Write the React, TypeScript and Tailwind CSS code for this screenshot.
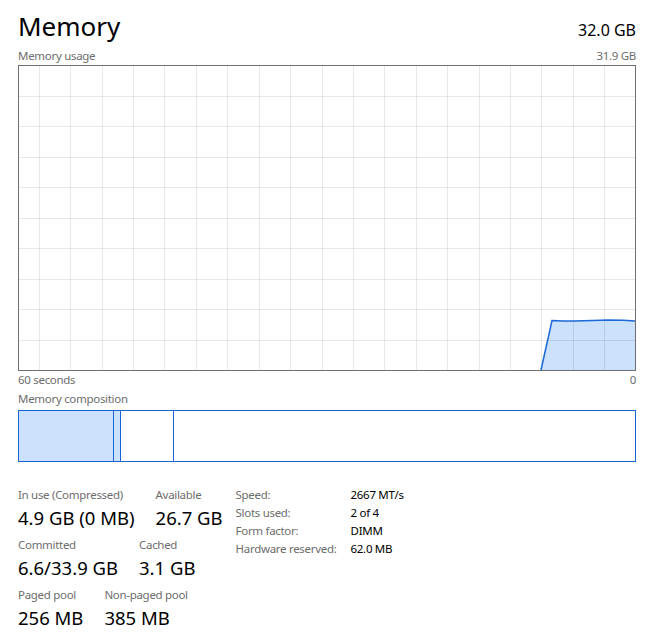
const vLines = [21, 52, 84, 115, 146, 178, 209, 241, 272, 304, 335, 366, 398, 429, 461, 492, 523, 555, 586];
const hLines = [31, 61, 92, 122, 153, 183, 214, 244, 275];

function UsageChart() {
  const top = "523,305 534,255.5 545,256 556,256 575,255.5 590,255 605,255.2 617,256";
  return (
    <svg width="618" height="306" className="block">
      <rect x="0" y="0" width="618" height="306" fill="#fff" />
      <polygon points={`${top} 617,305 523,305`} fill="#cce1fb" />
      {vLines.map((x) => (
        <line key={x} x1={x + 0.5} y1="1" x2={x + 0.5} y2="305" stroke="#000" strokeOpacity="0.09" />
      ))}
      {hLines.map((y) => (
        <line key={y} x1="1" y1={y + 0.5} x2="617" y2={y + 0.5} stroke="#000" strokeOpacity="0.09" />
      ))}
      <polyline points={top} fill="none" stroke="#1a6ad8" strokeWidth="1.5" />
      <rect x="0.5" y="0.5" width="617" height="305" fill="none" stroke="#6f6f6f" />
    </svg>
  );
}

function Stat({ label, value }: { label: string; value: string }) {
  return (
    <div className="flex flex-col">
      <div className="text-[11.5px] leading-[16px] tracking-[-0.3px] text-[#6d6d6d]">{label}</div>
      <div className="mt-[3px] text-[18.5px] leading-[24px] text-black">{value}</div>
    </div>
  );
}

const details = [
  ["Speed:", "2667 MT/s"],
  ["Slots used:", "2 of 4"],
  ["Form factor:", "DIMM"],
  ["Hardware reserved:", "62.0 MB"],
];

export default function App() {
  return (
    <div className="w-[652px] h-[642px] overflow-hidden bg-white pl-[18px] pr-[16px] font-['Noto_Sans',sans-serif] text-black">
      <div className="flex items-baseline justify-between pt-[9px]">
        <h1 className="text-[26px] leading-[34px] font-normal">Memory</h1>
        <span className="text-[16px] leading-[20px]">32.0 GB</span>
      </div>

      <div className="mt-[5px] flex justify-between text-[11.5px] leading-[15px] tracking-[-0.3px] text-[#6d6d6d]">
        <span>Memory usage</span>
        <span>31.9 GB</span>
      </div>

      <div className="mt-[2px]">
        <UsageChart />
      </div>

      <div className="mt-[1px] flex justify-between text-[11.5px] leading-[16px] tracking-[-0.3px] text-[#6d6d6d]">
        <span>60 seconds</span>
        <span>0</span>
      </div>

      <div className="mt-[3px] text-[11.5px] leading-[16px] tracking-[-0.3px] text-[#6d6d6d]">Memory composition</div>

      <div className="mt-[3px] flex h-[52px] border border-[#1464d8]">
        <div className="w-[95px] border-r border-[#1464d8] bg-[#cce1fb]" />
        <div className="w-[7px] border-r border-[#1464d8] bg-[#cce1fb]" />
        <div className="w-[53px] border-r border-[#1464d8]" />
        <div className="flex-1" />
      </div>

      <div className="mt-[25px] flex gap-[13px]">
        <div className="flex flex-col gap-[7px]">
          <div className="flex gap-[21px]">
            <Stat label="In use (Compressed)" value="4.9 GB (0 MB)" />
            <Stat label="Available" value="26.7 GB" />
          </div>
          <div className="flex gap-[21px]">
            <Stat label="Committed" value="6.6/33.9 GB" />
            <Stat label="Cached" value="3.1 GB" />
          </div>
          <div className="flex gap-[21px]">
            <Stat label="Paged pool" value="256 MB" />
            <Stat label="Non-paged pool" value="385 MB" />
          </div>
        </div>

        <div className="-mt-px grid h-fit grid-cols-[115px_auto] text-[11.5px] leading-[18px] tracking-[-0.3px]">
          {details.map(([k, v]) => (
            <div key={k} className="contents">
              <span className="text-[#6d6d6d]">{k}</span>
              <span className="text-black">{v}</span>
            </div>
          ))}
        </div>
      </div>
    </div>
  );
}
